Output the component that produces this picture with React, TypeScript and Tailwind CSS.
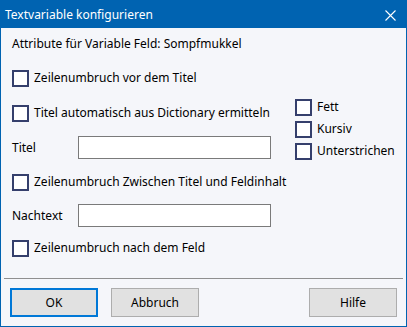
const Check = ({ label }: { label: string }) => (
  <div className="flex items-center h-[18px]">
    <span className="box-border w-[17px] h-[17px] border-2 border-[#353f6c] bg-white shrink-0" />
    <span className="ml-[5px] whitespace-nowrap">{label}</span>
  </div>
);

const Field = ({ label }: { label: string }) => (
  <div className="flex items-center h-[23px]">
    <span className="w-[66px] whitespace-nowrap">{label}</span>
    <span className="box-border w-[193px] h-[23px] border border-[#7a7a7a] bg-white" />
  </div>
);

const Button = ({ label, primary }: { label: string; primary?: boolean }) => (
  <button
    className={
      primary
        ? "box-border w-[88px] h-[29px] border-2 border-[#0078d7] bg-[#e1e1e1] text-black"
        : "box-border w-[88px] h-[29px] border border-[#adadad] bg-[#e1e1e1] text-black"
    }
  >
    {label}
  </button>
);

export default function App() {
  return (
    <div
      className="box-border w-[407px] h-[327px] border border-[#0063b1] bg-[#f5f6fa] text-[12px] text-black flex flex-col"
      style={{ fontFamily: '"Noto Sans", sans-serif' }}
    >
      {/* TITLE BAR */}
      <div className="h-[27px] bg-[#0063b1] flex items-center justify-between pl-[4px] pr-[10px] text-white shrink-0">
        <span>Textvariable konfigurieren</span>
        <svg width="11" height="11" viewBox="0 0 11 11" className="mt-[1px]">
          <path d="M0.5 0.5 L10.5 10.5 M10.5 0.5 L0.5 10.5" stroke="white" strokeWidth="1.1" />
        </svg>
      </div>

      {/* CONTENT */}
      <div className="pl-[11px]">
        <div className="h-[18px] mt-[7px] flex items-center">
          Attribute für Variable Feld: Sompfmukkel
        </div>
        <div className="flex">
          <div className="w-[283px] flex flex-col">
            <div className="mt-[16px]">
              <Check label="Zeilenumbruch vor dem Titel" />
            </div>
            <div className="mt-[17px]">
              <Check label="Titel automatisch aus Dictionary ermitteln" />
            </div>
            <div className="mt-[14px]">
              <Field label="Titel" />
            </div>
            <div className="mt-[14px]">
              <Check label="Zeilenumbruch Zwischen Titel und Feldinhalt" />
            </div>
            <div className="mt-[13px]">
              <Field label="Nachtext" />
            </div>
            <div className="mt-[12px]">
              <Check label="Zeilenumbruch nach dem Feld" />
            </div>
          </div>
          <div className="flex flex-col gap-[4px] mt-[45px]">
            <Check label="Fett" />
            <Check label="Kursiv" />
            <Check label="Unterstrichen" />
          </div>
        </div>
      </div>

      {/* FOOTER */}
      <div className="mt-auto">
        <div className="mx-[3px] h-px bg-[#8f8f8f]" />
        <div className="flex items-center gap-[13px] px-[9px] pt-[9px] pb-[9px]">
          <Button label="OK" primary />
          <Button label="Abbruch" />
          <div className="flex-1" />
          <Button label="Hilfe" />
        </div>
      </div>
    </div>
  );
}
